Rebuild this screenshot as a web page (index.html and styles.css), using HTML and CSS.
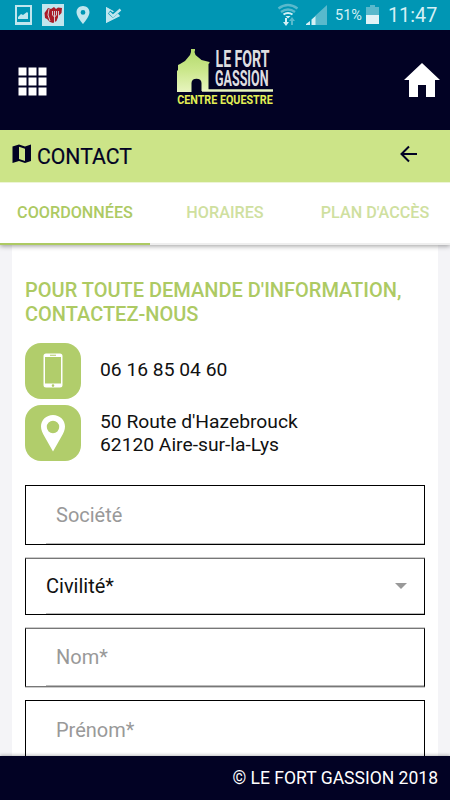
FILE: index.html
```html
<!DOCTYPE html>
<html lang="fr">
<head>
<meta charset="utf-8">
<meta name="viewport" content="width=device-width, initial-scale=1">
<title>Contact</title>
<link rel="stylesheet" href="styles.css">
</head>
<body>
<div class="app">
  <div class="status">
    <svg class="status-icons" width="140" height="30" viewBox="0 0 140 30">
      <path fill="#c0e6ee" fill-rule="evenodd" d="M15 5h17v20H15zM17 7v15h13V7z"/>
      <path fill="#c0e6ee" d="M18 19v-2l3-3 2 1 4-3 1 1v6z"/>
      <path fill="#c0e6ee" d="M42 4h22v22H42z"/>
      <path fill="#a91c28" d="M44.500 13l3.500-5 3 1 3-2 2 2 2-1.500 4 .5-.5 5-3 3-2 5-3.500 2-3-1-3-3-2-1z"/>
      <path fill="none" stroke="#d9dfe4" stroke-width=".9" d="M49 9l-1 6 2 6M54.500 23V11M52.500 11v4l2 2 2-2v-4M58.500 19v-8"/>
      <path fill="#c0e6ee" fill-rule="evenodd" d="M83 6c-3.800 0-6.500 2.800-6.500 6.300C76.500 17 83 24 83 24s6.500-7 6.500-11.700C89.500 8.800 86.800 6 83 6zm0 4a2.400 2.400 0 1 1 0 4.800 2.400 2.400 0 0 1 0-4.800z"/>
      <path fill="#c0e6ee" d="M106 7l12 6.500 2 2.500-14 7z"/>
      <path fill="none" stroke="#0096b4" stroke-width="4.400" d="M109 12.200l3.800 3 8-7"/>
      <path fill="none" stroke="#c0e6ee" stroke-width="2.400" d="M109.500 12.500l3.500 3.500 7.500-6.500"/>
      <path fill="#c0e6ee" d="M106 7v16l14-7-3-1-4 3.500-5-5V9l7 3z" opacity=".9"/>
    </svg>
    <svg class="status-signal" width="54" height="30" viewBox="0 0 54 30">
      <g fill="none" stroke="#59b9cc" stroke-width="2.400">
        <path d="M2.500 8.500q9.500-7 19 0"/><path d="M5 12q7-5 14 0"/>
      </g>
      <path fill="none" stroke="#d5f0f5" stroke-width="2" d="M7.500 14.500q4.500-3 9 0"/>
      <path fill="#d5f0f5" d="M9.500 16h5l-2.500 2.500zM9 18h2v4h2l-3 4-3-4h2z"/>
      <path fill="#59b9cc" d="M15 25v-4h-2l3-4 3 4h-2v4zM51 5v20H39v-9z"/>
      <path fill="#d5f0f5" d="M30 25v-1l4-3v4zM35.500 25v-5.500l4-3.500v9z"/>
    </svg>
    <span class="percent">51%</span>
    <svg class="battery" width="14" height="30" viewBox="0 0 14 30">
      <path fill="#59b9cc" d="M4 5h5v2h4v8H0V7h4z"/><path fill="#e0f3f7" d="M0 15h13v9H0z"/>
    </svg>
    <span class="clock">11:47</span>
  </div>
  <header class="header">
    <svg width="29" height="29" viewBox="0 0 29 29" fill="#fff">
      <path d="M.5.500h8v8h-8zM10.500.500h8v8h-8zM20.500.500h8v8h-8zM.5 10.500h8v8h-8zM10.500 10.500h8v8h-8zM20.500 10.500h8v8h-8zM.5 20.500h8v8h-8zM10.500 20.500h8v8h-8zM20.500 20.500h8v8h-8z"/>
    </svg>
    <svg class="logo" width="120" height="60" viewBox="175 47 120 60">
      <defs><linearGradient id="g" x1="0" y1="0" x2="0" y2="1"><stop offset="0" stop-color="#b2d96b"/><stop offset=".5" stop-color="#cbe78c"/><stop offset="1" stop-color="#e8f5bf"/></linearGradient></defs>
      <path fill="url(#g)" d="M191 49h4v1.500l-.5 1.500 1 3 6 5 8 2v1l-1 1v27h-7V83c0-2.800-2-4.300-5-4.300s-5 1.500-5 4.300v9H177V71l1-1v-5l2-1 5-3 5-6 1-3z"/>
      <path fill="#e8f5bf" d="M202 89.200h71V91.700h-71z"/>
      <g class="logo-name">
        <text x="215.500" y="66.800" font-size="24.500" textLength="54" lengthAdjust="spacingAndGlyphs">LE FORT</text>
        <text x="215" y="86" font-size="22.500" textLength="53.500" lengthAdjust="spacingAndGlyphs">GASSION</text>
      </g>
      <text class="logo-sub" x="177.200" y="104" font-size="12.500" textLength="95.500" lengthAdjust="spacingAndGlyphs">CENTRE EQUESTRE</text>
    </svg>
    <svg class="home" width="36" height="34" viewBox="0 0 36 34"><path fill="#fff" d="M18 0l18 17h-5v17h-9V22h-8v12H5V17H0z"/></svg>
  </header>
  <div class="titlebar">
    <svg width="20" height="20" viewBox="0 0 20 20">
      <path fill="#020224" fill-rule="evenodd" d="M.5 2.500L7 .5l6 2 6-2v16.500l-6 2-6-2-6.500 2zM7 2.700V15l6 2V4.700z"/>
    </svg>
    <h1 class="title">CONTACT</h1>
    <svg class="back" width="18" height="18" viewBox="0 0 18 18"><path fill="none" stroke="#020224" stroke-width="2" d="M17 9H2M9 1.500L1.500 9 9 16.500"/></svg>
  </div>
  <nav class="tabs">
    <div class="tab active"><span>COORDONNÉES</span></div>
    <div class="tab"><span>HORAIRES</span></div>
    <div class="tab last"><span>PLAN D'ACCÈS</span></div>
  </nav>
  <main class="content">
    <section class="card">
      <h2 class="heading">POUR TOUTE DEMANDE D'INFORMATION,<br>CONTACTEZ-NOUS</h2>
      <div class="info">
        <div class="badge"><svg width="20" height="36" viewBox="0 0 20 36"><path fill="#fff" fill-rule="evenodd" d="M3 .5h14a2.500 2.500 0 0 1 2.500 2.500v29a2.500 2.500 0 0 1-2.500 2.500H3A2.500 2.500 0 0 1 .5 32V3A2.500 2.500 0 0 1 3 .5zM2 4v26.500h16V4zM7 1.700v1h6v-1zM10 31.300a1.300 1.300 0 1 0 0 2.600 1.300 1.300 0 0 0 0-2.600z"/></svg></div>
        <p class="info-text phone">06 16 85 04 60</p>
      </div>
      <div class="info">
        <div class="badge"><svg width="24" height="37" viewBox="0 0 24 37"><path fill="#fff" fill-rule="evenodd" d="M12 0C5.300 0 0 5 0 11.500 0 15 1.500 18 3.500 21.500L12 36.500l8.500-15C22.500 18 24 15 24 11.500 24 5 18.700 0 12 0zm0 5.800a6.200 6.200 0 1 1 0 12.400 6.200 6.200 0 0 1 0-12.400z"/></svg></div>
        <p class="info-text address">50 Route d'Hazebrouck<br>62120 Aire-sur-la-Lys</p>
      </div>
      <form class="form">
        <div class="field"><span>Société</span></div>
        <div class="field select"><span>Civilité*</span><svg width="12" height="6" viewBox="0 0 12 6"><path fill="#999" d="M0 0h12L6 6z"/></svg></div>
        <div class="field soft"><span>Nom*</span></div>
        <div class="field"><span>Prénom*</span></div>
      </form>
    </section>
  </main>
  <footer class="footer"><span>© LE FORT GASSION 2018</span></footer>
</div>
</body>
</html>
```
FILE: styles.css
```css
* { box-sizing: border-box; }
body { margin: 0; font-family: Roboto, sans-serif; color: #111; }
h1, h2, p { margin: 0; font-weight: 400; }
svg { display: block; flex: none; }
.app { width: 450px; height: 800px; display: flex; flex-direction: column; overflow: hidden; background: #f4f4f7; }

.status { height: 30px; flex: none; display: flex; align-items: center; background: #0096b4; color: #d5f0f5; }
.status-signal { margin-left: 136px; }
.percent { width: 31px; margin-left: 5px; font-size: 14.5px; line-height: 20px; padding-top: 2px; }
.clock { margin-left: 8px; font-size: 19.8px; line-height: 22px; padding-top: 2px; }

.header { height: 100px; flex: none; display: flex; align-items: center; padding: 0 10px 0 18px; background: #020224; }
.header svg:first-child { margin-top: 2px; }
.logo { margin: -6px 0 0 128px; overflow: visible; }
.home { margin-left: auto; }
.logo-name { font-family: "Liberation Sans Narrow", Roboto, sans-serif; font-weight: 700; fill: #dedde0; }
.logo-sub { font-weight: 700; fill: #e3ef55; }

.titlebar { height: 52px; flex: none; display: flex; align-items: center; padding: 0 32px 4px 12px; background: #cce488; color: #020224; position: relative; z-index: 1; }
.title { margin: 5px 0 0 5px; font-size: 21.2px; line-height: 24px; -webkit-text-stroke: .2px #020224; }
.back { margin-left: auto; }

.tabs { height: 63px; flex: none; display: flex; position: relative; background: #fff; border-top: 1px solid #edf5d5; box-shadow: 0 1px 5px rgba(0,0,0,.4); }
.tab { flex: 1; padding-top: 20px; text-align: center; font-size: 16.2px; line-height: 20px; font-weight: 500; color: #cfe09f; border-bottom: 2px solid #eee; }
.tab.active { color: #adca63; border-bottom-color: #adca63; }
.tab.last { white-space: nowrap; }

.content { flex: 1; min-height: 0; overflow: hidden; padding: 0 12px; }
.card { height: 620px; padding: 33px 13px 0; background: #fff; }
.heading { margin-bottom: 17px; font-size: 20px; line-height: 24px; font-weight: 500; color: #adca63; white-space: nowrap; }
.info { display: flex; align-items: center; margin-bottom: 6px; }
.badge { width: 56px; height: 56px; display: flex; align-items: center; justify-content: center; border-radius: 16px; background: #b1cd6b; }
.info-text { margin-left: 19px; font-size: 19.25px; line-height: 22.5px; }
.phone { padding-bottom: 2px; }
.address { padding-top: 1px; }
.form { display: flex; flex-direction: column; gap: 13px; margin-top: 24px; }
.field { height: 60px; flex: none; display: flex; align-items: center; padding: 0 0 1px 30px; border: 1px solid #000; font-size: 20px; color: #999; background: linear-gradient(#bbb, #bbb) 20px 100% / 100% 1px no-repeat; }
.select { height: 57px; padding: 0 17px 2px 20px; justify-content: space-between; color: #111; border-top-color: #777; box-shadow: 0 -1px 0 #ccc; }
.soft { height: 59px; border-top-color: #777; border-bottom-color: #777; box-shadow: 0 -1px 0 #ccc, 0 1px 0 #ccc; }

.footer { height: 44px; flex: none; display: flex; justify-content: flex-end; align-items: center; padding: 0 12px 1px; background: #020224; color: #fff; font-size: 17.55px; position: relative; box-shadow: 0 -1px 3px rgba(0,0,0,.25); }
```
